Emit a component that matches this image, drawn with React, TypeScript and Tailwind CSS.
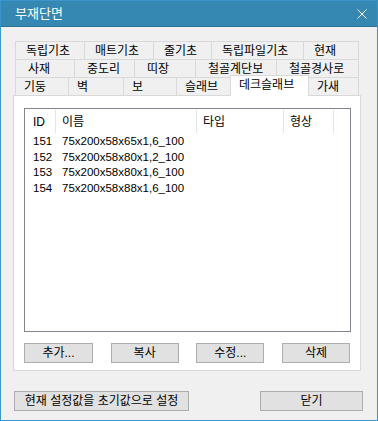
import React from "react";

const row1 = [
  { t: "독립기초", w: 69 },
  { t: "매트기초", w: 69 },
  { t: "줄기초", w: 58 },
  { t: "독립파일기초", w: 92 },
  { t: "현재", w: 56 },
];
const row2 = [
  { t: "사재", w: 59 },
  { t: "중도리", w: 60 },
  { t: "띠장", w: 61 },
  { t: "철골계단보", w: 81 },
  { t: "철골경사로", w: 83 },
];
const row3 = [
  { t: "기둥", w: 53 },
  { t: "벽", w: 55 },
  { t: "보", w: 53 },
  { t: "슬래브", w: 54 },
  { t: "데크슬래브", w: 78, sel: true },
  { t: "가새", w: 51 },
];

const rows = [
  ["151", "75x200x58x65x1,6_100"],
  ["152", "75x200x58x80x1,2_100"],
  ["153", "75x200x58x80x1,6_100"],
  ["154", "75x200x58x88x1,6_100"],
];

function TabRow({ items, pad }: { items: { t: string; w: number; sel?: boolean }[]; pad: string }) {
  return (
    <div className="flex h-[18px] items-start">
      {items.map((it, i) => {
        const last = i === items.length - 1;
        if (it.sel) {
          return (
            <div
              key={it.t}
              style={{ width: it.w + 1 }}
              className={`relative z-10 -mt-[2px] -mr-px flex h-[21px] items-center border-l border-r border-t border-[#d9d9d9] bg-white pb-[3px] ${pad} whitespace-nowrap`}
            >
              {it.t}
            </div>
          );
        }
        return (
          <div
            key={it.t}
            style={{ width: it.w }}
            className={`flex h-[18px] items-center border-l border-t border-[#d9d9d9] bg-[#f0f0f0] ${pad} whitespace-nowrap ${last ? "border-r" : ""}`}
          >
            {it.t}
          </div>
        );
      })}
    </div>
  );
}

function Btn({ label, w }: { label: string; w: number }) {
  return (
    <div
      style={{ width: w }}
      className="flex h-[20px] items-center justify-center border border-[#adadad] bg-[#e1e1e1] text-[12px]"
    >
      {label}
    </div>
  );
}

export default function App() {
  return (
    <div className="flex h-[421px] w-[378px] flex-col border border-[#3b95ca] bg-[#f0f0f0] font-['Liberation_Sans','Noto_Sans_CJK_KR',sans-serif] text-[12px] leading-none text-black">
      <div className="flex h-[26px] items-center justify-between border-b border-[#2c7399] bg-[#3488b1] pl-[14px] pr-[10px]">
        <span className="text-[13px] text-white">부재단면</span>
        <svg width="10" height="10" viewBox="0 0 10 10" className="mr-[0px]">
          <path d="M0.5 0.5 L9.5 9.5 M9.5 0.5 L0.5 9.5" stroke="white" strokeWidth="1" />
        </svg>
      </div>

      <div className="ml-[14px] mt-[14px] w-[344px]">
        <TabRow items={row1} pad="pl-[10px]" />
        <TabRow items={row2} pad="pl-[12px]" />
        <TabRow items={row3} pad="pl-[8px]" />
      </div>

      <div className="ml-[12px] flex h-[276px] w-[348px] flex-col border border-[#d9d9d9] bg-white">
        <div className="ml-[10px] mt-[12px] h-[224px] w-[327px] border border-[#828790] bg-white">
          <div className="flex h-[25px] pt-px">
            <div className="flex h-[23px] w-[31px] items-center border-r border-[#e5e5e5] pl-[8px]">ID</div>
            <div className="flex h-[23px] w-[141px] items-center border-r border-[#e5e5e5] pl-[6px]">이름</div>
            <div className="flex h-[23px] w-[87px] items-center border-r border-[#e5e5e5] pl-[6px]">타입</div>
            <div className="flex h-[23px] w-[50px] items-center border-r border-[#e5e5e5] pl-[6px]">형상</div>
          </div>
          {rows.map(([id, name]) => (
            <div key={id} className="flex h-[15.5px] items-center text-[11.5px]">
              <div className="w-[31px] pl-[8px]">{id}</div>
              <div className="w-[141px] pl-[6px] whitespace-nowrap">{name}</div>
            </div>
          ))}
        </div>
        <div className="ml-[10px] mt-[11px] flex w-[326px] justify-between">
          <Btn label="추가..." w={69} />
          <Btn label="복사" w={68} />
          <Btn label="수정..." w={68} />
          <Btn label="삭제" w={68} />
        </div>
      </div>

      <div className="mt-[20px] flex justify-between pl-[13px] pr-[14px]">
        <div className="flex h-[20px] w-[175px] items-center justify-center border border-[#adadad] bg-[#e1e1e1] text-[12px] whitespace-nowrap">
          현재 설정값을 초기값으로 설정
        </div>
        <Btn label="닫기" w={103} />
      </div>
    </div>
  );
}
